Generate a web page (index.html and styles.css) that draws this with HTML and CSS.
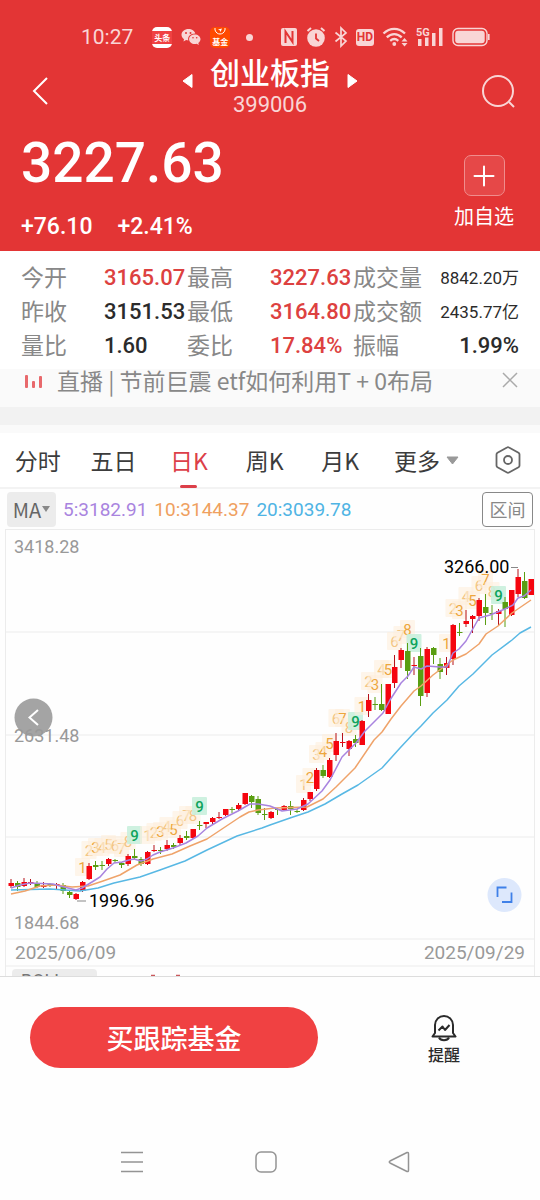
FILE: index.html
```html
<!DOCTYPE html>
<html lang="zh-CN">
<head>
<meta charset="utf-8">
<meta name="viewport" content="width=device-width, initial-scale=1">
<title>创业板指 399006</title>
<link rel="stylesheet" href="styles.css">
</head>
<body>
<div class="app">
  <header class="hero">
    <div class="status">
      <time class="clock">10:27</time>
      <span class="notices">
        <span class="app-icon news">头条</span>
        <svg width="20" height="20" viewBox="0 0 20 20" fill="#f9d5d5" aria-hidden="true">
          <path d="M7.500 2C3.600 2 .5 4.600 .5 7.800c0 1.800 1 3.300 2.500 4.400L2.500 14.500l2.600-1.400c.8.200 1.600.3 2.200.3-.9-4 2-7 7-7C13.700 3.900 10.900 2 7.500 2z"/>
          <path d="M13.800 7.500c-3.200 0-5.700 2.100-5.700 4.700s2.500 4.800 5.700 4.800c.7 0 1.300-.1 1.900-.3l2.100 1.200-.5-1.900c1.300-.9 2.200-2.200 2.200-3.700 0-2.700-2.500-4.800-5.700-4.800z"/>
          <g fill="#e33535"><circle cx="5" cy="6" r="1"/><circle cx="9.500" cy="6" r="1"/><circle cx="12" cy="10.700" r=".8"/><circle cx="15.700" cy="10.700" r=".8"/></g>
        </svg>
        <span class="app-icon fund">
          <svg width="16" height="8" viewBox="0 0 16 8" fill="none" stroke="#fff" aria-hidden="true"><path d="M3 0v2c1 3 3 4 5 4s4-1 5-4V0"/><path d="M6 1.500l4-1-1.500 3.500-.8-1.700z" fill="#fff" stroke="none"/></svg>
          基金
        </span>
        <span class="dot"></span>
      </span>
      <span class="signals">
        <svg width="18" height="20" viewBox="0 0 18 20" aria-hidden="true"><rect x="1" y="1" width="16" height="18" rx="2" fill="#f9d5d5"/><path d="M5.500 16V4.500l7 10.500V4" fill="none" stroke="#e33535" stroke-width="2"/></svg>
        <svg width="20" height="22" viewBox="0 0 20 22" aria-hidden="true"><circle cx="10" cy="12" r="8.800" fill="#f9d5d5"/><path d="M1.500 5L5 2M18.500 5L15 2" stroke="#f9d5d5" stroke-width="2"/><path d="M10 7.500v5l3 2.500" fill="none" stroke="#e33535" stroke-width="1.800"/></svg>
        <svg width="14" height="22" viewBox="0 0 14 22" fill="none" stroke="#f9d5d5" stroke-width="1.700" aria-hidden="true"><path d="M1.500 6.500L12 15l-5 5V2l5 5L1.500 15.500"/></svg>
        <span class="hd">HD</span>
        <svg width="26" height="20" viewBox="0 0 26 20" aria-hidden="true"><g fill="none" stroke="#f9d5d5" stroke-width="2.300"><path d="M1.500 6.500C8 .2 16.500 .2 23 6.500"/><path d="M4.800 10.300c4.500-4.300 10.400-4.300 14.900 0"/><path d="M8.200 13.800c2.600-2.200 5.600-2.200 8.100 0"/></g><circle cx="12.300" cy="17" r="1.900" fill="#f9d5d5"/><path d="M19.500 14.500l3-3.500 3 3.500zM19.500 16l3 3.500 3-3.500z" fill="#f9d5d5"/></svg>
        <svg width="28" height="22" viewBox="0 0 28 22" fill="#f9d5d5" aria-hidden="true"><text x="0" y="10" class="net">5G</text><rect x="2" y="13" width="3.500" height="7"/><rect x="9" y="11.500" width="3.500" height="8.500"/><rect x="16" y="7" width="3.500" height="13"/><rect x="23" y="2" width="3.500" height="18"/></svg>
        <svg width="38" height="20" viewBox="0 0 38 20" aria-hidden="true"><rect x="1" y="1.500" width="34" height="17" rx="5" fill="none" stroke="#f9d5d5" stroke-width="1.400"/><rect x="3.200" y="3.700" width="29.500" height="12.600" rx="3" fill="#f9d5d5"/><path d="M36.800 7v6" stroke="#f9d5d5" stroke-width="1.600"/></svg>
      </span>
    </div>
    <div class="titlebar">
      <button class="plain" aria-label="返回"><svg width="18" height="30" viewBox="0 0 18 30" fill="none" stroke="#fff" stroke-width="2"><path d="M16 2L3 15l13 13"/></svg></button>
      <div class="title">
        <button class="plain" aria-label="上一个"><svg width="12" height="18" viewBox="0 0 12 18"><path d="M1 9l9-6.500v13z" fill="#fff" stroke="#fff" stroke-linejoin="round"/></svg></button>
        <div class="names"><h1>创业板指</h1><p>399006</p></div>
        <button class="plain" aria-label="下一个"><svg width="12" height="18" viewBox="0 0 12 18"><path d="M11 9L2 2.500v13z" fill="#fff" stroke="#fff" stroke-linejoin="round"/></svg></button>
      </div>
      <button class="plain" aria-label="搜索"><svg width="36" height="38" viewBox="0 0 36 38" fill="none" stroke="#f9d5d5" stroke-width="2"><circle cx="18" cy="19" r="15"/><path d="M29 30l5 5"/></svg></button>
    </div>
    <div class="quote">
      <div>
        <strong class="price">3227.63</strong>
        <p class="change"><span>+76.10</span><span>+2.41%</span></p>
      </div>
      <button class="add"><span class="plus"><svg width="22" height="22" viewBox="0 0 22 22" stroke="#fff" stroke-width="2" stroke-linecap="round"><path d="M1.500 11h19M11 1.500v19"/></svg></span>加自选</button>
    </div>
  </header>

  <dl class="stats">
    <dt>今开</dt><dd class="up">3165.07</dd><dt>最高</dt><dd class="up">3227.63</dd><dt>成交量</dt><dd class="last small">8842.20万</dd>
    <dt>昨收</dt><dd>3151.53</dd><dt>最低</dt><dd class="up">3164.80</dd><dt>成交额</dt><dd class="last small">2435.77亿</dd>
    <dt>量比</dt><dd>1.60</dd><dt>委比</dt><dd class="up">17.84%</dd><dt>振幅</dt><dd class="last">1.99%</dd>
  </dl>

  <div class="ticker">
    <svg width="20" height="16" viewBox="0 0 20 16" fill="#e8696c" aria-hidden="true"><rect x="1" y="3" width="3" height="13" rx="1"/><rect x="8" y="9" width="3" height="7" rx="1"/><rect x="15" y="4" width="3" height="12" rx="1"/></svg>
    <a href="#live">直播 | 节前巨震 etf如何利用T + 0布局</a>
    <button class="plain" aria-label="关闭"><svg width="18" height="18" viewBox="0 0 18 18" stroke="#aaa" stroke-width="1.500"><path d="M2 2l14 14M16 2L2 16"/></svg></button>
  </div>

  <nav class="tabs">
    <button>分时</button><button>五日</button><button class="active">日K</button><button>周K</button><button>月K</button>
    <button class="more">更多<svg width="13" height="9" viewBox="0 0 13 9"><path d="M1 1h11L6.500 8z" fill="#999" stroke="#999" stroke-linejoin="round"/></svg></button>
    <button class="gear" aria-label="设置"><svg width="26" height="28" viewBox="0 0 26 28" fill="none" stroke="#666" stroke-width="1.800"><path d="M12 1.500q1-.6 2 0l9.500 5.200q1 .6 1 1.700v11.200q0 1.100-1 1.700L14 26.500q-1 .6-2 0L2.500 21.300q-1-.6-1-1.700V8.400q0-1.100 1-1.700z"/><circle cx="13" cy="14" r="4"/></svg></button>
  </nav>

  <div class="legend">
    <button class="ma">MA<svg width="8" height="6" viewBox="0 0 8 6"><path d="M0 0h8L4 6z" fill="#888"/></svg></button>
    <span class="ma5">5:3182.91</span><span class="ma10">10:3144.37</span><span class="ma20">20:3039.78</span>
    <button class="range">区间</button>
  </div>

  <main class="chart">
    <svg class="plot" viewBox="0 529 540 447" role="img" aria-label="日K线图">
      <path d="M5 529.500H535M5 632H535M5 735H535M5 837H535M5 939H535M5 966H535M5.500 529V976M534.500 529V976" fill="none" stroke="#ececec"/>
      <g class="axis">
        <text x="14" y="553">3418.28</text><text x="14" y="929">1844.68</text>
        <text x="15" y="959" class="date">2025/06/09</text><text x="525" y="959" class="date end">2025/09/29</text>
      </g>
      <rect x="12" y="969" width="85" height="34" rx="4" fill="#ececec"/>
      <text x="21" y="987" class="sub">BOLL</text>
      <path d="M151 975.500h4M176 975.500h4" stroke="#c9585c" stroke-width="1.500"/>
      <g id="marks"></g>
      <g id="candles"></g>
      <g fill="none" stroke-width="1.500" stroke-linejoin="round">
        <polyline id="ma20" stroke="#58b8e4"/><polyline id="ma10" stroke="#efa36a"/><polyline id="ma5" stroke="#a984df"/>
      </g>
      <path d="M77 901h9M511 567.500h7" stroke="#888"/>
      <g class="extreme"><text x="89" y="907">1996.96</text><text x="444" y="573">3266.00</text></g>
      <g><circle cx="33.500" cy="717.500" r="19" fill="#a4a4a4"/><path d="M38 710l-8.500 7.500 8.500 7.500" fill="none" stroke="#fff" stroke-width="2"/></g>
      <g class="axis"><text x="14" y="742">2631.48</text></g>
      <g><circle cx="504.500" cy="895" r="17" fill="#dde8fc"/><path d="M497.500 897v-9.500h9M511.500 892.500V902h-9.500" fill="none" stroke="#3f80e8" stroke-width="1.800"/></g>
    </svg>
  </main>

  <footer class="actions">
    <button class="buy">买跟踪基金</button>
    <button class="remind"><svg width="28" height="28" viewBox="0 0 28 28" fill="none" stroke="#2b2b2b" stroke-width="2" stroke-linejoin="round"><path d="M2.500 22.500L5 19v-8a9 9 0 0 1 18 0v8l2.500 3.500z"/><path d="M9 23.500a5.300 4 0 0 0 10 0"/><path d="M8.500 16.500l4-4 2.500 3.500 4.500-5"/></svg>提醒</button>
  </footer>

  <nav class="system">
    <button class="plain" aria-label="最近任务"><svg width="22" height="22" viewBox="0 0 22 22" stroke="#949494" stroke-width="1.500"><path d="M0 1.500h22M0 11h22M0 20.500h22"/></svg></button>
    <button class="plain" aria-label="主屏幕"><svg width="22" height="22" viewBox="0 0 22 22" fill="none" stroke="#949494" stroke-width="1.500"><rect x="1" y="1" width="20" height="20" rx="5"/></svg></button>
    <button class="plain" aria-label="返回上级"><svg width="22" height="22" viewBox="0 0 22 22" fill="none" stroke="#949494" stroke-width="1.500" stroke-linejoin="round"><path d="M19 1.500q1.500-.5 1.500 1.500v16q0 2-1.500 1.500L2 12q-1.500-1 0-2z"/></svg></button>
  </nav>
</div>
<script src="chart.js"></script>
</body>
</html>
```
FILE: styles.css
```css
* { box-sizing: border-box; }
body {
  margin: 0;
  background: #fefefe;
  color: #2b2b2b;
  font-family: "Noto Sans CJK SC", "Noto Sans", sans-serif;
}
h1, p, dl, dd { margin: 0; }
svg { display: block; flex: none; }
button {
  margin: 0;
  padding: 0;
  border: 0;
  background: none;
  color: inherit;
  font: inherit;
  white-space: nowrap;
}
.app { display: flex; flex-direction: column; min-height: 100vh; }
.clock, .names p, .price, .change, .stats dd, .legend span, .plot text {
  font-family: Roboto, "Noto Sans CJK SC", sans-serif;
}

.hero {
  background: #e33535;
  color: #fff;
  padding: 24px 24px 8px 21px;
}
.status {
  display: flex;
  align-items: center;
  height: 26px;
  padding: 0 26px 0 60px;
  color: #f9d5d5;
}
.clock { font-size: 21px; line-height: 26px; }
.notices { display: flex; align-items: center; gap: 9px; margin-left: 19px; }
.app-icon {
  display: flex;
  flex-direction: column;
  align-items: center;
  justify-content: center;
  width: 20px;
  height: 21px;
  border-radius: 5px;
  color: #fff;
  font-size: 8px;
  font-weight: 700;
  line-height: 11px;
}
.news { background: linear-gradient(#fff 4px, #f04142 4px, #f04142 17px, #fff 17px); }
.fund { background: #ff4a00; }
.dot { width: 7px; height: 7px; margin-left: 7px; border-radius: 50%; background: #f9d5d5; }
.signals { display: flex; align-items: center; gap: 8px; margin-left: auto; }
.hd {
  width: 18px;
  border-radius: 3px;
  background: #f9d5d5;
  color: #e33535;
  font: 700 12px/17px Roboto, sans-serif;
  text-align: center;
}
.plot .sub { font-size: 18px; fill: #777; }
.net { font: 700 11px Roboto, sans-serif; }

.titlebar {
  display: flex;
  align-items: center;
  justify-content: space-between;
  height: 70px;
  padding-left: 10px;
}
.titlebar > .plain { margin-top: 12px; }
.title { display: flex; gap: 16px; text-align: center; padding-left: 11px; }
.title .plain { align-self: flex-start; margin-top: 21px; }
.names { min-width: 120px; }
.names h1 { font-size: 30px; font-weight: 500; line-height: 40px; }
.names p { font-size: 22px; line-height: 28px; color: #f9d5d5; }
.quote { display: flex; justify-content: space-between; align-items: flex-end; }
.price { display: block; font-size: 55px; font-weight: 500; line-height: 86px; }
.change {
  display: flex;
  gap: 25px;
  margin-top: 4px;
  font-size: 23px;
  font-weight: 500;
  line-height: 33px;
}
.add {
  display: flex;
  flex-direction: column;
  align-items: center;
  gap: 5px;
  margin: 0 2px 12px 0;
  font-size: 20px;
  line-height: 30px;
}
.plus {
  display: grid;
  place-items: center;
  width: 41px;
  height: 41px;
  border: 1px solid #f08d8d;
  border-radius: 7px;
  background: #e64848;
}

.stats {
  display: grid;
  grid-template-columns: repeat(6, minmax(0, 1fr));
  grid-auto-rows: 34px;
  padding: 8px 21px;
  background: #fff;
  font-size: 23px;
  line-height: 34px;
  white-space: nowrap;
}
.stats dt { color: #888; }
.stats dd { padding-top: 2px; font-size: 22px; font-weight: 500; }
.stats .up { color: #dd4140; }
.stats .last { display: flex; justify-content: flex-end; }
.stats .small { font-size: 17px; font-weight: 400; }

.ticker {
  display: flex;
  align-items: center;
  gap: 13px;
  height: 64px;
  padding: 0 21px 42px 24px;
  background: linear-gradient(#fafafa 38px, #f2f2f2 38px, #f2f2f2 56px, #fafafa 56px);
  color: #888;
  font-size: 23px;
  line-height: 22px;
}
.ticker a { flex: 1; color: inherit; text-decoration: none; white-space: nowrap; }

.tabs {
  display: flex;
  height: 56px;
  border-bottom: 2px solid #f3f3f3;
  background: #fff;
  color: #3c3c3c;
  font-size: 23px;
}
.tabs button { flex: 0 0 14%; }
.tabs .active { position: relative; color: #dc3f49; }
.tabs .active::after {
  content: "";
  position: absolute;
  bottom: -1px;
  left: 50%;
  width: 17px;
  height: 3px;
  margin-left: -9px;
  border-radius: 2px;
  background: #dc3f49;
}
.tabs .more { display: flex; flex-basis: auto; align-items: center; gap: 6px; padding-left: 16px; }
.tabs .gear { flex-basis: auto; margin-left: auto; margin-right: 19px; }

.legend {
  display: flex;
  align-items: center;
  gap: 7px;
  height: 40px;
  padding: 0 7px;
  font-size: 19px;
  white-space: nowrap;
}
.ma {
  display: flex;
  align-items: center;
  justify-content: center;
  gap: 1px;
  width: 49px;
  height: 35px;
  border-radius: 4px;
  background: #ececec;
  color: #666;
  font-size: 20px;
}
.ma5 { color: #a984df; }
.ma10 { color: #efa05f; }
.ma20 { color: #4fb4e4; }
.range {
  width: 51px;
  height: 35px;
  margin-left: auto;
  border: 1px solid #888;
  border-radius: 4px;
  color: #888;
  font-size: 18px;
}

.chart { border-bottom: 1px solid #ddd; }
.plot { width: 100%; height: auto; }
.axis { fill: #999; font-size: 18px; }
.date { font-size: 19px; }
.end { text-anchor: end; }
.extreme { fill: #000; font-size: 18px; }
.mark { font-size: 15px; text-anchor: middle; fill: #eda63d; }
.mark-faint { fill: #f3c584; }
.mark-nine { fill: #0ea35c; font-weight: 500; }

.actions {
  display: flex;
  align-items: center;
  padding: 30px 30px 0;
}
.buy {
  flex: 0 0 60%;
  height: 61px;
  border-radius: 31px;
  background: #f04142;
  color: #fff;
  font-size: 27px;
  font-weight: 500;
}
.remind {
  display: flex;
  flex: 1;
  flex-direction: column;
  align-items: center;
  padding: 5px 0 0 60px;
  font-size: 16px;
  font-weight: 500;
  line-height: 24px;
}
.system {
  display: flex;
  justify-content: space-between;
  margin-top: auto;
  padding: 0 130px 27px 121px;
}
```
FILE: chart.js
```js
const NS = "http://www.w3.org/2000/svg";
const STEP = 6.5;
const FIRST = 11;

// Each session: direction, body top, body bottom, high, low.
const sessions = [
  ["r",883,886,879,888],["g",883,887,881,891],["r",882,886,878,887],["r",882,883,879,885],["g",883,887,881,888],
  ["r",885,887,882,888],["g",884,886,883,887],["r",884,886,883,889],["g",885,891,883,894],["g",892,895,890,898],
  ["r",894,899,893,900],["r",882,891,881,892],["r",866,879,863,880],["g",865,867,861,870],["g",865,866,861,870],
  ["r",859,864,858,866],["g",860,861,859,863],["g",863,865,862,868],["r",856,864,854,866],["g",856,858,849,859],
  ["g",859,864,857,866],["r",852,864,851,865],["r",850,851,845,852],["g",850,851,847,854],["r",845,849,840,851],
  ["g",845,847,843,849],["r",838,843,835,845],["g",836,838,831,840],["r",829,838,829,839],["g",825,826,821,830],
  ["r",822,824,822,828],["r",818,822,817,824],["r",817,818,812,819],["r",809,815,809,816],["g",809,810,807,813],
  ["r",805,809,803,811],["r",793,804,793,805],["g",796,802,795,808],["g",799,813,796,815],["g",814,815,808,820],
  ["r",812,818,811,819],["g",809,810,808,815],["r",806,810,805,811],["g",806,809,801,815],["g",811,812,809,813],
  ["r",800,810,798,811],["r",792,799,792,801],["r",770,789,768,791],["g",770,776,765,778],["r",760,777,758,778],
  ["r",741,755,733,761],["r",742,743,733,747],["r",741,749,740,756],["g",739,743,735,747],["r",721,745,720,745],
  ["r",700,711,694,717],["g",704,705,697,710],["g",704,710,684,711],["r",684,714,684,714],["r",667,683,655,688],
  ["r",650,660,648,668],["g",651,671,643,679],["r",665,666,657,675],["g",656,696,648,706],["r",649,693,647,697],
  ["g",648,655,647,664],["g",664,672,658,679],["r",663,668,657,675],["r",625,659,624,665],["g",632,633,623,636],
  ["r",621,624,610,627],["r",616,619,615,633],["r",600,616,598,621],["g",607,613,594,625],["g",613,614,605,620],
  ["r",611,614,609,626],["g",602,609,597,627],["r",590,615,590,616],["r",577,594,569,597],["g",581,598,572,599],
  ["r",579,595,579,595]
];

// Sequence counts above the candles: session index, count, centre height, faint.
const counts = [
  [11,1,867,0],[12,2,850,1],[13,3,847,0],[14,4,847,1],[15,5,844,1],[16,6,845,1],[17,7,848,1],[18,8,841,1],[19,9,835,0],
  [21,1,835,1],[22,2,832,1],[23,3,831,0],[24,4,826,1],[25,5,829,0],[26,6,820,1],[27,7,815,1],[28,8,815,1],[29,9,806,0],
  [45,1,784,1],[46,2,777,0],[47,3,754,1],[48,4,751,0],[49,5,743,0],[50,6,718,1],[51,7,718,0],[52,8,727,1],[53,9,721,0],
  [54,1,706,0],[55,2,681,1],[56,3,684,0],[57,4,669,1],[58,5,669,0],[59,6,641,1],[60,7,635,1],[61,8,629,0],[62,9,643,0],
  [67,1,643,0],[68,2,608,1],[69,3,610,0],[70,4,596,1],[71,5,600,0],[72,6,585,1],[73,7,579,0],[74,8,591,1],[75,9,595,0]
];

const averages = {
  ma5: "11,888 20,885 30,883 53,884 60,886 76,890 82,888 92,882 100,877 107,869 114,863 122,862 129,860 134,859 141,861 147,859 153,855 160,852 173,848 186,843 198,836 207,828 222,819 238,811 250,804 258,804 270,806 282,811 297,809 308,804 322,791 330,780 342,757 356,743 365,731 376,720 383,713 390,700 401,683 408,676 414,667 421,669 427,666 440,667 447,667 453,653 459,649 466,641 479,618 490,615 505,609 513,605 518,598 524,596 531,590",
  ma10: "11,894 25,891 40,886 56,885 72,887 88,886 103,881 120,875 137,865 153,859 172,854 190,846 207,839 222,829 240,817 249,812 258,810 275,808 307,807 323,799 336,787 355,768 374,740 382,732 391,719 401,706 414,691 421,686 433,675 453,660 466,654 479,644 486,634 498,626 512,613 531,600",
  ma20: "11,890 50,889 80,891 98,888 114,883 140,877 160,870 185,861 207,850 237,836 262,828 270,825 290,818 308,812 325,804 342,794 358,785 382,768 400,748 414,733 421,726 433,713 447,700 459,686 473,674 492,655 512,640 520,633 531,627"
};

function add(parent, tag, attrs, text) {
  const node = document.createElementNS(NS, tag);
  for (const key in attrs) node.setAttribute(key, attrs[key]);
  if (text !== undefined) node.textContent = text;
  parent.appendChild(node);
}

const marks = document.getElementById("marks");
for (const [index, count, y, faint] of counts) {
  const x = FIRST + index * STEP;
  const nine = count === 9;
  add(marks, "rect", { x: x - 7.5, y: y - 9, width: 15, height: 18, rx: 1, fill: nine ? "#c9f0dd" : "#fdefdc", "fill-opacity": nine ? 0.9 : 0.6 });
  add(marks, "text", { x, y: y + 5.5, class: nine ? "mark mark-nine" : faint ? "mark mark-faint" : "mark" }, count);
}

const candles = document.getElementById("candles");
sessions.forEach(([dir, top, bottom, high, low], index) => {
  const x = FIRST + index * STEP;
  const fill = dir === "r" ? "#f5050f" : "#5a9e12";
  add(candles, "rect", { x: x - 0.5, y: high, width: 1, height: low - high, fill: dir === "r" ? "#b5121b" : "#5a9e12" });
  add(candles, "rect", { x: x - 2.5, y: top, width: 5.5, height: Math.max(1, bottom - top), fill });
});

for (const id in averages) document.getElementById(id).setAttribute("points", averages[id]);
```
